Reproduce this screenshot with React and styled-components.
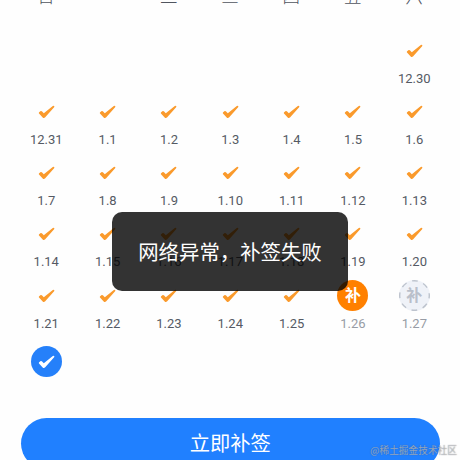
import React from "react";
import styled, { createGlobalStyle, css } from "styled-components";

const GlobalStyle = createGlobalStyle`
  * { box-sizing: border-box; }
  html, body { margin: 0; background: #fefefe; overflow: hidden; }
  body { font-family: Roboto, "Noto Sans CJK SC", sans-serif; }
`;

const Screen = styled.main`
  position: relative;
  width: 460px;
  height: 460px;
  overflow: hidden;
  display: flex;
  flex-direction: column;
  background: #fefefe;
`;

const WeekHeader = styled.header`
  display: grid;
  grid-template-columns: repeat(7, 1fr);
  flex: none;
  height: 35px;
  padding: 0 15.3px;
`;

const Weekday = styled.span`
  margin-top: -15px;
  height: 24px;
  line-height: 24px;
  font-size: 17.5px;
  font-weight: 300;
  text-align: center;
  color: #50555f;
`;

const Calendar = styled.section`
  display: grid;
  grid-template-columns: repeat(7, 1fr);
  grid-template-rows: repeat(4, 61.3px) 66.2px 31px;
  flex: none;
  padding: 0 15px 0 15.6px;
`;

const Day = styled.div`
  display: flex;
  flex-direction: column;
  align-items: center;
`;

const badgeKinds = {
  done: css`color: #fa9a2c;`,
  makeup: css`color: #fff; background: #ff8000;`,
  pending: css`color: #b9bfca; background: #eff2f8;`,
  today: css`color: #fff; background: #2580fa;`,
};

const Badge = styled.div`
  position: relative;
  display: flex;
  align-items: center;
  justify-content: center;
  width: 31px;
  height: 31px;
  border-radius: 50%;
  font-size: 16px;
  font-weight: 700;
  line-height: 31px;
  ${({ $kind }) => badgeKinds[$kind]}
`;

const DashRing = styled.svg`
  position: absolute;
  inset: 0;
`;

const DateLabel = styled.span`
  margin-top: 4.6px;
  height: 16px;
  line-height: 16px;
  font-size: 13px;
  color: ${({ $muted }) => ($muted ? "#979ca5" : "#555a64")};
`;

const Submit = styled.button`
  flex: none;
  height: 51px;
  margin: 40.8px 20px 0 20.5px;
  padding: 0;
  border: 0;
  border-radius: 26px;
  background: #2080ff;
  color: #fff;
  font: 400 20.3px/49px "Noto Sans CJK SC", sans-serif;
  display: flex;
  align-items: flex-start;
  justify-content: center;
`;

const Toast = styled.div`
  position: absolute;
  left: 112.4px;
  top: 212.4px;
  width: 235.2px;
  height: 79px;
  border-radius: 10px;
  background: rgba(0, 0, 0, 0.8);
  color: #fff;
  font: 400 20.4px/78px "Noto Sans CJK SC", sans-serif;
  text-align: center;
  white-space: nowrap;
`;

const Watermark = styled.span`
  position: absolute;
  right: 3px;
  bottom: 1px;
  font: 400 9.7px/18px "Noto Sans CJK SC", sans-serif;
  color: rgba(255, 255, 255, 0.45);
  text-shadow: 0 0 1px rgba(70, 75, 85, 0.8);
  white-space: nowrap;
`;

const Check = () => (
  <svg width="17" height="14" viewBox="0 0 17 14" aria-hidden="true">
    <path
      d="M1.1 7.2 L2.7 6.1 Q3.5 5.8 4.1 6.5 L5.8 8.2 L14.8 .9 Q16 .4 16.4 1.5 Q16.4 2 15.9 2.5 L7.2 12.2 Q5.9 13.5 4.7 12.4 L1 8.6 Q.5 7.8 1.1 7.2Z"
      fill="currentColor"
    />
  </svg>
);

const weekdays = ["日", "一", "二", "三", "四", "五", "六"];
const dates = [
  "12.30", "12.31",
  ...Array.from({ length: 27 }, (_, i) => `1.${i + 1}`),
];
const kinds = { "1.26": "makeup", "1.27": "pending" };

function CalendarDay({ date, kind = "done" }) {
  const isText = kind === "makeup" || kind === "pending";
  return (
    <Day>
      <Badge $kind={kind}>
        {kind === "pending" && (
          <DashRing width="31" height="31" viewBox="0 0 31 31">
            <circle cx="15.5" cy="15.5" r="14.8" fill="none" stroke="#bdc3cd" strokeWidth="1.4" strokeDasharray="5.8 5.82" strokeDashoffset="2.9" />
          </DashRing>
        )}
        {isText ? "补" : <Check />}
      </Badge>
      {date && <DateLabel $muted={isText}>{date}</DateLabel>}
    </Day>
  );
}

export default function App() {
  return (
    <>
      <GlobalStyle />
      <Screen lang="zh-CN">
        <WeekHeader>
          {weekdays.map((day) => <Weekday key={day}>{day}</Weekday>)}
        </WeekHeader>
        <Calendar>
          {Array.from({ length: 6 }, (_, i) => <Day key={i} />)}
          {dates.map((date) => <CalendarDay key={date} date={date} kind={kinds[date]} />)}
          <CalendarDay kind="today" />
        </Calendar>
        <Submit>立即补签</Submit>
        <Toast role="alert">网络异常，补签失败</Toast>
        <Watermark>@稀土掘金技术社区</Watermark>
      </Screen>
    </>
  );
}
